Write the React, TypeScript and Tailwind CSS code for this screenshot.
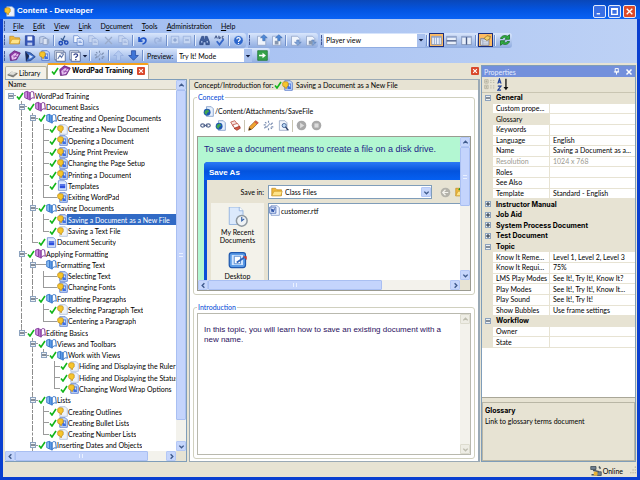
import React from "react";

/* ---------- Icons (16 x 16 grid) ---------- */

type IconProps = { size?: string; children: React.ReactNode };

function Icon({ size = "size-[11px]", children }: IconProps) {
  return (
    <svg viewBox="0 0 16 16" className={`${size} shrink-0`} fill="none" aria-hidden="true">
      {children}
    </svg>
  );
}

const Check = ({ size = "size-[8px]" }: { size?: string }) => (
  <Icon size={size}>
    <path d="M2 9l4 5L14 2" stroke="#12b51a" strokeWidth="3.2" />
  </Icon>
);

const Book = ({ blue = false }: { blue?: boolean }) => {
  const dark = blue ? "#2a6bc4" : "#7a2a92";
  const light = blue ? "#8fc1f5" : "#d49be6";
  return (
    <Icon>
      <path d="M1 3l4-1v11l-4-2z" fill={light} stroke={dark} strokeWidth="1.2" />
      <path d="M5 2l4 2v11l-4-2z" fill={blue ? "#5c9be8" : "#b56fcb"} stroke={dark} strokeWidth=".8" />
      <path d="M9 4c1-2 3-2 5-1l1 9c-2-1-4-1-6 2z" fill="#fff" stroke={dark} strokeWidth="1.4" />
    </Icon>
  );
};

const PurpleTopic = () => (
  <Icon size="size-[12px]">
    <path d="M1 6l6-5 8 3-5 9-8 1z" fill="#8d3aa5" stroke="#5d1c73" />
    <path d="M3 8l5-4 5 2-4 6-5 1z" fill="#e6c3f0" />
    <path d="M5 8l6 1M6 11l5-6" stroke="#8d3aa5" />
  </Icon>
);

const BubblePage = ({ screen = false }: { screen?: boolean }) => (
  <Icon>
    <path d="M4 1h8l3 3v11H4z" fill={screen ? "#c5dafa" : "#eef3fb"} stroke={screen ? "#3a62c0" : "#9fb2d0"} />
    {screen && <path d="M7 5h6v8H8z" fill="#3f6fe0" />}
    {screen && <path d="M9 7l3-1v5z" fill="#d5e4ff" />}
    <path d="M1 4c0-2 8-2 8 0v4c0 1-1 1-2 2l-1 3-2-3c-2 0-3-1-3-2z" fill="#f7c52c" stroke="#b07d10" strokeWidth=".9" />
  </Icon>
);

const TextPage = () => (
  <Icon>
    <path d="M2 1h9l3 3v11H2z" fill="#dce8ff" stroke="#5577c8" />
    <path d="M4 6h8v1.500H4zM4 8h8v4H4z" fill="#2d4fe0" />
  </Icon>
);

const Folder = ({ size = "size-[12px]", arrow = false }: { size?: string; arrow?: boolean }) => (
  <Icon size={size}>
    <path d="M1 13V3h5l2 2h6v8z" fill="#f0b83c" stroke="#b98216" strokeWidth=".8" />
    <path d="M1 13l3-6h11l-2 6z" fill="#ffe48a" stroke="#c89322" strokeWidth=".8" />
    {arrow && <path d="M8 9V3M5 5l3-4 3 4z" fill="#169a2a" stroke="#169a2a" />}
  </Icon>
);

const Save = () => (
  <Icon>
    <path d="M2 1h12l1 1v13H2z" fill="#3555b8" stroke="#1f3a92" />
    <path d="M5 2h7v6H5z" fill="#eef3ff" />
    <path d="M5 11h7v4H5z" fill="#b8c8ee" />
  </Icon>
);

const Pages = ({ faded = false }: { faded?: boolean }) => (
  <Icon>
    <path d="M1 1h6l3 3v7H1z" fill={faded ? "#c7d6f1" : "#f2f7ff"} stroke={faded ? "#93abd8" : "#5b7fc6"} />
    <path d="M6 5h6l3 3v7H6z" fill={faded ? "#c7d6f1" : "#dfeaff"} stroke={faded ? "#93abd8" : "#5b7fc6"} />
    <path d="M8 9h4M8 11h5" stroke={faded ? "#93abd8" : "#5b7fc6"} />
  </Icon>
);

const BooksGray = () => (
  <Icon>
    <path d="M1 3l5-1 4 2v9l-5-1-4 1z" fill="#c4d2ea" stroke="#7d92bb" />
    <path d="M6 5h6v9H6z" fill="#dbe4f3" stroke="#7d92bb" />
    <path d="M12 7l3-2v7l-3 2z" fill="#9aacc9" />
  </Icon>
);

const Cut = () => (
  <Icon>
    <path d="M10 1L6 9M4 5l8 5" stroke="#35598f" strokeWidth="1.800" />
    <circle cx="4" cy="12" r="2.500" stroke="#1d49b8" strokeWidth="2" />
    <circle cx="12" cy="11" r="2.500" stroke="#1d49b8" strokeWidth="2" />
  </Icon>
);

const Cross = () => (
  <Icon>
    <path d="M3 3l10 10M13 3L3 13" stroke="#9aabcb" strokeWidth="1.800" />
  </Icon>
);

const Undo = ({ redo = false }: { redo?: boolean }) => (
  <Icon>
    {redo ? (
      <path d="M13 3v6H8M12 8C9 3 4 4 4 8c0 2 1 4 3 4" stroke="#9bb1dc" strokeWidth="1.800" />
    ) : (
      <path d="M3 3v6h5M4 8c3-5 9-4 9 0 0 2-2 5-5 5" stroke="#2458c8" strokeWidth="2.400" />
    )}
  </Icon>
);

const BoxSign = ({ plus = false }: { plus?: boolean }) => (
  <Icon size="size-[10px]">
    <path d="M2 2h12v12H2z" fill="#c4d5f2" stroke="#91a9d6" />
    <path d={plus ? "M5 8h6M8 5v6" : "M5 8h6"} stroke="#7d96c8" strokeWidth="1.500" />
  </Icon>
);

const Binoculars = () => (
  <Icon>
    <path d="M4 2h3v4h2V2h3l3 8v4h-5v-4H6v4H1v-4z" fill="#405f9d" stroke="#27437e" />
    <path d="M3 10h2M11 10h2" stroke="#c9dcff" strokeWidth="2" />
  </Icon>
);

const Spell = () => (
  <Icon>
    <path d="M1 5l2-4 2 4M2 4h2M7 1v4h2V3H7M14 2h-2v3h2" stroke="#31477a" strokeWidth="1.200" />
    <path d="M4 9l4 5 6-8" stroke="#3667c9" strokeWidth="2.600" />
  </Icon>
);

const Help = () => (
  <Icon>
    <circle cx="8" cy="8" r="7" fill="#2c66cc" stroke="#cfe0fb" />
    <path d="M5.500 6c0-3 5-3 5 0 0 2-2.500 1.500-2.500 4M8 11.500v1.500" stroke="#fff" strokeWidth="1.700" />
  </Icon>
);

const PageArrow = ({ down = false, lock = false }: { down?: boolean; lock?: boolean }) => (
  <Icon size="size-[12px]">
    <path d="M2 3h8l3 3v9H2z" fill="#eff4fc" stroke="#8b9fc4" />
    {down ? (
      <path d="M9 8h3v3h3l-4.500 4L6 11h3z" fill="#7fa4d8" stroke="#5579b5" strokeWidth=".8" />
    ) : (
      <path d="M9 9V5H6l4.500-4L15 5h-3v4z" fill="#4f8ad8" stroke="#3464ae" strokeWidth=".8" />
    )}
    {lock && <path d="M5 9h5v5H5z" fill="#8797af" />}
  </Icon>
);

const Player = () => (
  <Icon size="size-[12px]">
    <path d="M2 2l7 2 6 5-6 5-6 1z" fill="#3d6ec9" stroke="#213d7c" />
    <path d="M2 2l5 6-4 7z" fill="#1b2a52" />
    <path d="M7 6l5 3-5 3z" fill="#cfe1ff" />
  </Icon>
);

const Windows = ({ mark }: { mark: boolean }) => (
  <Icon size="size-[12px]">
    <path d="M1 1h12v12H1z" fill="#f5f8ff" stroke="#5e6f93" />
    <path d="M3 3h12v12H3z" fill="#fff" stroke="#3f5383" />
    {mark ? (
      <path d="M6.500 7c0-2.500 5-2.500 5 0 0 2-2.500 1.500-2.500 3.500M9 12v1.500" stroke="#31418a" strokeWidth="1.700" />
    ) : (
      <path d="M5 12l3-5 2 3 3-5M9 5h4" stroke="#6278ab" strokeWidth="1.400" />
    )}
  </Icon>
);

const BrokenLink = () => (
  <Icon>
    <path d="M2 12l3-3M11 7l3-3M3 3l2 2M8 1v3M13 13l-2-2M8 15v-3M1 7h3M12 10h3" stroke="#7c8fb1" strokeWidth="1.700" />
    <path d="M5 11l5-6" stroke="#93a5c5" strokeWidth="1.500" />
  </Icon>
);

const BlockArrow = ({ down = false }: { down?: boolean }) => (
  <Icon>
    {down ? (
      <path d="M5 1h6v7h4l-7 7-7-7h4z" fill="#3e74d6" stroke="#1c429a" />
    ) : (
      <path d="M5 15h6V8h4L8 1 1 8h4z" fill="#b4caf0" stroke="#91abdd" />
    )}
  </Icon>
);

const GoArrow = () => (
  <Icon>
    <path d="M1 1h14v14H1z" fill="#35a24a" stroke="#17722a" />
    <path d="M3 7h5V4l5 4-5 4V9H3z" fill="#fff" />
  </Icon>
);

const Panes = ({ split }: { split: "list" | "rows" | "columns" }) => (
  <Icon>
    <path d="M1 2h14v12H1z" fill="#e8effa" stroke="#6c7fa6" />
    <path d="M1 3h14" stroke="#93a7cf" strokeWidth="2" />
    {split === "list" && <path d="M5 3v11M8 3v11M12 3v11" stroke="#8da3cc" strokeWidth="1.200" />}
    {split === "rows" && <path d="M1 8.500h14" stroke="#4a5d88" strokeWidth="2" />}
    {split === "columns" && <path d="M8 3v11" stroke="#4a5d88" strokeWidth="2" />}
  </Icon>
);

const PropertySheet = () => (
  <Icon>
    <path d="M1 5h12v10H1z" fill="#e9eef7" stroke="#5c6c8d" />
    <path d="M1 7h12M4 7v8M4 10h9M4 13h9" stroke="#8795b3" />
    <path d="M6 5l4-4 5 1-1 4-4 2z" fill="#f3cf68" stroke="#80611e" />
  </Icon>
);

const Refresh = () => (
  <Icon size="size-[12px]">
    <path d="M2 6c1-4 7-5 9-3l3-2v6H8l2-2C8 4 6 4 5 6z" fill="#30b040" stroke="#12691e" />
    <path d="M14 10c-1 4-7 5-9 3l-3 2V9h6l-2 2c2 1 4 1 5-1z" fill="#30b040" stroke="#12691e" />
  </Icon>
);

const Link = () => (
  <Icon>
    <ellipse cx="4" cy="8" rx="3" ry="2.300" stroke="#53658e" strokeWidth="1.700" />
    <ellipse cx="12" cy="8" rx="3" ry="2.300" stroke="#53658e" strokeWidth="1.700" />
    <path d="M5 8h6" stroke="#53658e" strokeWidth="1.700" />
  </Icon>
);

const WebPage = () => (
  <Icon>
    <path d="M5 1h7l3 3v11H5z" fill="#e6effc" stroke="#6586bc" />
    <circle cx="6" cy="9" r="5" fill="#1d56b0" />
    <path d="M3 7l4-2 2 3-3 2-1 3-3-3z" fill="#43a651" />
  </Icon>
);

const RedPages = () => (
  <Icon>
    <path d="M1 3l6-2 3 4-5 5z" fill="#f6dfdb" stroke="#b23a2c" />
    <path d="M4 7l7-2 3 5-7 3z" fill="#fff" stroke="#b23a2c" />
    <path d="M6 12l8-3 1 3-5 3z" fill="#d65a45" stroke="#8f2418" />
  </Icon>
);

const Pencil = () => (
  <Icon>
    <path d="M1 15l1-5L11 1l4 3-9 9z" fill="#f0a32e" stroke="#8c5614" />
    <path d="M1 15l1-4 3 3z" fill="#3b2a1a" />
    <path d="M11 1l4 3-2 2-4-3z" fill="#d45b4a" />
  </Icon>
);

const Preview = () => (
  <Icon>
    <path d="M2 1h8l3 3v11H2z" fill="#f1f5fc" stroke="#8698b9" />
    <circle cx="9" cy="8" r="3" fill="#bcd8f5" stroke="#3f5f93" strokeWidth="1.300" />
    <path d="M11 10l4 5" stroke="#2c3f66" strokeWidth="2" />
  </Icon>
);

const GrayDisc = ({ stop = false }: { stop?: boolean }) => (
  <Icon>
    <circle cx="8" cy="8" r="7" fill="#a8a8a8" />
    <path d={stop ? "M5 5h6v6H5z" : "M6 4l6 4-6 4z"} fill="#dcdcdc" />
  </Icon>
);

const LibraryIcon = () => (
  <Icon>
    <path d="M1 10l6-4 8 2-6 5z" fill="#8a8a85" stroke="#5d5d58" />
    <path d="M2 9l5-4 7 2-5 3z" fill="#deded8" />
  </Icon>
);

const OnlineIcon = () => (
  <Icon size="size-[12px]">
    <path d="M1 2h7v4H1zM9 9h6v5H9z" fill="#6f7f8f" stroke="#3a4652" />
    <path d="M2 13h6M4 7l8 2M12 2l2 3" stroke="#4a5662" strokeWidth="2" />
    <path d="M5 9h5v5H5z" fill="#eab333" />
  </Icon>
);

const WordFile = () => (
  <Icon>
    <path d="M3 1h9l3 3v11H3z" fill="#f0f5ff" stroke="#6a88c0" />
    <path d="M1 3h9v9H1z" fill="#dbe6fb" stroke="#2e55a8" />
    <path d="M3 5l1.500 5L5.500 6l1 4L8 5" stroke="#1f479f" strokeWidth="1.300" />
  </Icon>
);

const RecentIcon = () => (
  <Icon size="size-[20px]">
    <path d="M1 0h8l3 3v11H1z" fill="#dbe9fc" stroke="#8fb0de" strokeWidth=".7" />
    <path d="M9 0v3h3" fill="#fff" stroke="#8fb0de" strokeWidth=".7" />
    <circle cx="11" cy="11" r="4.300" fill="#eef2f5" stroke="#8d979f" strokeWidth="1.200" />
    <path d="M11 8v3l2-1.500" stroke="#2f5ea8" strokeWidth=".9" />
  </Icon>
);

const DesktopIcon = () => (
  <Icon size="size-[20px]">
    <rect x="1" y="2" width="13" height="12" rx="2" fill="#5b9be6" stroke="#1f58ae" />
    <path d="M3 4h9v8H3z" fill="#cfe4ff" />
    <path d="M5 5h5v6H5z" fill="#fff" stroke="#4d83cc" strokeWidth=".7" />
    <path d="M7 10l6-4" stroke="#2e62b8" strokeWidth="1.400" />
    <path d="M12 5h3v3z" fill="#d3392a" />
  </Icon>
);

const Categorized = () => (
  <Icon>
    <path d="M1 1h5v5H1zM1 9h5v5H1zM3.500 2v3M2 3.500h3M3.500 10v3M2 11.500h3M9 2h2M13 2h2M9 5h2M13 5h2M9 10h2M13 10h2M9 13h2M13 13h2" stroke="#aaa896" />
  </Icon>
);

/* ---------- Shared controls ---------- */

type Dir = "up" | "down" | "left" | "right";
const CHEVRONS: Record<Dir, string> = {
  up: "M3 10l5-5 5 5",
  down: "M3 6l5 5 5-5",
  left: "M10 3L5 8l5 5",
  right: "M6 3l5 5-5 5",
};

function ScrollButton({ dir, off = false }: { dir: Dir; off?: boolean }) {
  return (
    <button
      type="button"
      disabled={off}
      aria-label={`Scroll ${dir}`}
      className={`flex size-[10px] shrink-0 items-center justify-center rounded-[1px] border ${
        off ? "border-[#dddccf] bg-[#eeede5]" : "border-[#b4c8f6] bg-[#c6d6fc]"
      }`}
    >
      <Icon size="size-[7px]">
        <path d={CHEVRONS[dir]} stroke={off ? "#bdbcae" : "#3f5a8c"} strokeWidth="3.200" />
      </Icon>
    </button>
  );
}

function VScroll({ thumb, off = false }: { thumb?: string; off?: boolean }) {
  return (
    <div className="flex w-[10px] shrink-0 flex-col bg-[#f3f2ec]">
      <ScrollButton dir="up" off={off} />
      <div className="min-h-0 flex-1">
        {thumb && (
          <div className={`${thumb} flex items-center justify-center rounded-[1px] border border-[#a9bff2] bg-[#c4d4fc]`}>
            <span className="h-[4px] w-[4px] border-y border-[#e9f0ff]" />
          </div>
        )}
      </div>
      <ScrollButton dir="down" off={off} />
    </div>
  );
}

function HScroll({ thumb }: { thumb: string }) {
  return (
    <div className="flex h-[10px] min-w-0 flex-1 bg-[#f3f2ec]">
      <ScrollButton dir="left" />
      <div className="min-w-0 flex-1">
        <div className={`${thumb} flex h-[10px] items-center justify-center rounded-[1px] border border-[#a9bff2] bg-[#c4d4fc]`}>
          <span className="h-[4px] w-[4px] border-x border-[#e9f0ff]" />
        </div>
      </div>
      <ScrollButton dir="right" />
    </div>
  );
}

function Tool({ label, active = false, children }: { label: string; active?: boolean; children: React.ReactNode }) {
  return (
    <button
      type="button"
      aria-label={label}
      className={`flex h-[14px] w-[15px] shrink-0 items-center justify-center ${
        active ? "border border-[#1c2f7d] bg-[#fdbb62]" : ""
      }`}
    >
      {children}
    </button>
  );
}

const Sep = () => <span className="mx-[1px] h-[11px] w-[2px] shrink-0 border-l border-[#6f8fcb] border-r border-r-[#e8f0fd]" />;
const Grip = () => <span className="mx-[1px] h-[10px] w-[2px] shrink-0 border-l border-dashed border-[#41589a]" />;

function Strip({ children }: { children: React.ReactNode }) {
  return (
    <div className="flex h-[15px] shrink-0 items-center rounded-r-[3px] bg-linear-to-b from-[#d9e6fc] to-[#8eabe0]">
      <Grip />
      {children}
    </div>
  );
}

function Combo({ label, value, width }: { label: string; value: string; width: string }) {
  return (
    <div className={`${width} flex h-[13px] shrink-0 bg-white`}>
      <select aria-label={label} defaultValue={value} className="min-w-0 flex-1 appearance-none bg-white pl-[2px] outline-none">
        <option>{value}</option>
      </select>
      <span className="flex w-[8px] items-center justify-center bg-[#a9c1ee]">
        <Icon size="size-[6px]">
          <path d="M2 5h12l-6 7z" fill="#101c40" />
        </Icon>
      </span>
    </div>
  );
}

/* ---------- Tree ---------- */

type Kind = "book" | "folder" | "bubble" | "screen" | "text";
type Node = { name: string; depth: number; kind: Kind; checked?: boolean; rails?: string; last?: boolean; selected?: boolean };

/* rails: one letter per ancestor level, "|" continues a line and "." leaves it blank */
const NODES: Node[] = [
  { name: "WordPad Training", depth: 0, kind: "book", checked: true, rails: "", last: true },
  { name: "Document Basics", depth: 1, kind: "book", checked: true, rails: "." },
  { name: "Creating and Opening Documents", depth: 2, kind: "folder", checked: true, rails: ".|" },
  { name: "Creating a New Document", depth: 3, kind: "bubble", checked: true, rails: ".||" },
  { name: "Opening a Document", depth: 3, kind: "screen", checked: true, rails: ".||" },
  { name: "Using Print Preview", depth: 3, kind: "screen", checked: true, rails: ".||" },
  { name: "Changing the Page Setup", depth: 3, kind: "screen", checked: true, rails: ".||" },
  { name: "Printing a Document", depth: 3, kind: "screen", checked: true, rails: ".||" },
  { name: "Templates", depth: 3, kind: "text", checked: true, rails: ".||" },
  { name: "Exiting WordPad", depth: 3, kind: "screen", rails: ".||", last: true },
  { name: "Saving Documents", depth: 2, kind: "folder", checked: true, rails: ".|" },
  { name: "Saving a Document as a New File", depth: 3, kind: "screen", checked: true, rails: ".||", selected: true },
  { name: "Saving a Text File", depth: 3, kind: "bubble", checked: true, rails: ".||", last: true },
  { name: "Document Security", depth: 2, kind: "text", checked: true, rails: ".|", last: true },
  { name: "Applying Formatting", depth: 1, kind: "book", checked: true, rails: "." },
  { name: "Formatting Text", depth: 2, kind: "folder", rails: ".|" },
  { name: "Selecting Text", depth: 3, kind: "screen", rails: ".||" },
  { name: "Changing Fonts", depth: 3, kind: "screen", rails: ".||", last: true },
  { name: "Formatting Paragraphs", depth: 2, kind: "folder", checked: true, rails: ".|", last: true },
  { name: "Selecting Paragraph Text", depth: 3, kind: "bubble", checked: true, rails: ".|." },
  { name: "Centering a Paragraph", depth: 3, kind: "screen", rails: ".|.", last: true },
  { name: "Editing Basics", depth: 1, kind: "book", checked: true, rails: ".", last: true },
  { name: "Views and Toolbars", depth: 2, kind: "folder", checked: true, rails: ".." },
  { name: "Work with Views", depth: 3, kind: "folder", checked: true, rails: "..|", last: true },
  { name: "Hiding and Displaying the Ruler", depth: 4, kind: "bubble", checked: true, rails: "..|." },
  { name: "Hiding and Displaying the Status", depth: 4, kind: "bubble", checked: true, rails: "..|." },
  { name: "Changing Word Wrap Options", depth: 4, kind: "screen", checked: true, rails: "..|.", last: true },
  { name: "Lists", depth: 2, kind: "folder", checked: true, rails: ".." },
  { name: "Creating Outlines", depth: 3, kind: "bubble", checked: true, rails: "..|" },
  { name: "Creating Bullet Lists", depth: 3, kind: "screen", checked: true, rails: "..|" },
  { name: "Creating Number Lists", depth: 3, kind: "bubble", checked: true, rails: "..|", last: true },
  { name: "Inserting Dates and Objects", depth: 2, kind: "folder", checked: true, rails: ".." },
];

const KIND_ICONS: Record<Kind, React.ReactNode> = {
  book: <Book />,
  folder: <Book blue />,
  bubble: <BubblePage />,
  screen: <BubblePage screen />,
  text: <TextPage />,
};

function Expander({ open = true }: { open?: boolean }) {
  return (
    <button
      type="button"
      aria-label={open ? "Collapse" : "Expand"}
      className="flex size-[6px] shrink-0 items-center justify-center border border-[#8da3bf] bg-[#edf1f5]"
    >
      <svg viewBox="0 0 4 4" className="size-[4px] shrink-0" stroke="#1c2a3c" aria-hidden="true">
        <path d={open ? "M0 2h4" : "M0 2h4M2 0v4"} />
      </svg>
    </button>
  );
}

function TreeRow({ node }: { node: Node }) {
  const parent = node.kind === "book" || node.kind === "folder";
  return (
    <li role="treeitem" aria-level={node.depth + 1} aria-selected={!!node.selected} className="flex min-h-0 flex-1 items-center">
      {(node.rails ?? "").split("").map((rail, i) => (
        <span key={i} className={`ml-[5px] w-[6px] shrink-0 self-stretch ${rail === "|" ? "border-l border-dashed border-[#8c8c8c]" : ""}`} />
      ))}
      <span className="relative flex w-[11px] shrink-0 flex-col self-stretch pl-[5px]">
        <span className={`flex-1 border-b border-[#9a9a9a] ${node.depth > 0 ? "border-l" : ""}`} />
        <span className={`flex-1 border-[#9a9a9a] ${node.last ? "" : "border-l"}`} />
        {parent && (
          <span className="absolute inset-y-0 left-[3px] flex items-center">
            <Expander />
          </span>
        )}
      </span>
      <span className="flex w-[8px] shrink-0 justify-center">
        {node.checked ? <Check /> : <span className="h-[1px] w-[8px] bg-[#9a9a9a]" />}
      </span>
      <span className="flex w-[10px] shrink-0 justify-center">{KIND_ICONS[node.kind]}</span>
      <button
        type="button"
        className={`min-w-0 self-stretch overflow-hidden pl-[1px] text-left whitespace-nowrap ${
          node.selected ? "flex-1 bg-[#316ac5] text-white" : ""
        }`}
      >
        {node.name}
      </button>
    </li>
  );
}

/* ---------- Property grid ---------- */

type Prop = [string, string?];
const GROUPS: { title: string; items: Prop[] }[] = [
  {
    title: "General",
    items: [
      ["Custom prope..."],
      ["Glossary"],
      ["Keywords"],
      ["Language", "English"],
      ["Name", "Saving a Document as a..."],
      ["Resolution", "1024 x 768"],
      ["Roles"],
      ["See Also"],
      ["Template", "Standard - English"],
    ],
  },
  { title: "Instructor Manual", items: [] },
  { title: "Job Aid", items: [] },
  { title: "System Process Document", items: [] },
  { title: "Test Document", items: [] },
  {
    title: "Topic",
    items: [
      ["Know It Reme...", "Level 1, Level 2, Level 3"],
      ["Know It Requi...", "75%"],
      ["LMS Play Modes", "See It!, Try It!, Know It?"],
      ["Play Modes", "See It!, Try It!, Know It..."],
      ["Play Sound", "See It!, Try It!"],
      ["Show Bubbles", "Use frame settings"],
    ],
  },
  { title: "Workflow", items: [["Owner"], ["State"]] },
];

function PropertyTable() {
  return (
    <table className="h-[255px] w-full table-fixed border-separate border-spacing-0 leading-[9px] whitespace-nowrap">
      <colgroup>
        <col className="w-[11px]" />
        <col className="w-[57px]" />
        <col />
      </colgroup>
      {GROUPS.map((group) => (
        <tbody key={group.title}>
          <tr className="bg-[#e7e3d3]">
            <td className="border-b border-[#e7e3d3] p-0 pl-[3px]">
              <Expander open={group.items.length > 0} />
            </td>
            <th colSpan={2} className="border-b border-[#e7e3d3] p-0 pl-[3px] text-left font-[family-name:Inter,sans-serif] font-bold">
              {group.title}
            </th>
          </tr>
          {group.items.map(([name, value]) => (
            <tr key={name} className={name === "Resolution" ? "text-[#9b9a90]" : ""}>
              <td className="bg-[#e7e3d3] p-0" />
              <th
                className={`overflow-hidden border-r border-b border-[#e7e3d3] p-0 pl-[3px] text-left font-normal ${
                  name === "Glossary" ? "bg-[#e7e3d3]" : ""
                }`}
              >
                {name}
              </th>
              <td className="overflow-hidden border-b border-[#e7e3d3] p-0 pl-[3px]">{value}</td>
            </tr>
          ))}
        </tbody>
      ))}
    </table>
  );
}

/* ---------- Save As sample inside the concept page ---------- */

function SaveAsSample() {
  return (
    <div className="ml-[6px] flex min-h-0 flex-1 flex-col overflow-hidden rounded-tl-[4px] bg-[#0a50d8]">
      <div className="flex h-[18px] shrink-0 items-center bg-linear-to-b from-[#2a7af5] via-[#0453dd] to-[#0560f2] pt-[3px] pl-[5px] font-[family-name:'Liberation_Sans',sans-serif] text-[8px] font-bold text-white">
        Save As
      </div>
      <div className="ml-[3px] flex min-h-0 flex-1 flex-col gap-[4px] bg-[#e7e3d3] pt-[5px] pl-[4px]">
        <div className="flex h-[14px] shrink-0 items-center">
          <label htmlFor="save-in" className="w-[53px] shrink-0 text-right">
            Save in:
          </label>
          <div className="ml-[4px] flex h-[14px] w-[164px] shrink-0 items-center border border-[#7f9db9] bg-white pl-[2px]">
            <Folder />
            <select id="save-in" className="min-w-0 flex-1 appearance-none bg-white pl-[2px] outline-none">
              <option>Class Files</option>
            </select>
            <ScrollButton dir="down" />
          </div>
          <button type="button" aria-label="Back" className="ml-[8px] shrink-0">
            <Icon>
              <circle cx="8" cy="8" r="7" fill="#b3b2aa" />
              <path d="M12 8H5M8 4L4 8l4 4" stroke="#f4f3ee" strokeWidth="1.800" />
            </Icon>
          </button>
          <button type="button" aria-label="Up one level" className="ml-[4px] shrink-0">
            <Folder arrow />
          </button>
        </div>
        <div className="flex min-h-0 flex-1 gap-[4px]">
          <div className="flex w-[53px] shrink-0 flex-col items-center overflow-hidden bg-[#f3f2ea] pt-[4px] text-center leading-[8px]">
            <RecentIcon />
            <span className="mt-[1px]">My Recent Documents</span>
            <span className="mt-[6px]">
              <DesktopIcon />
            </span>
            <span className="mt-[2px]">Desktop</span>
          </div>
          <div className="flex-1 border-t border-l border-[#7f9db9] bg-white pt-[1px]">
            <div className="flex items-center gap-[1px]">
              <WordFile />
              customer.rtf
            </div>
          </div>
        </div>
      </div>
    </div>
  );
}

/* ---------- Window ---------- */

const MENUS: [string, string, string][] = [
  ["", "F", "ile"],
  ["", "E", "dit"],
  ["", "V", "iew"],
  ["", "L", "ink"],
  ["D", "o", "cument"],
  ["", "T", "ools"],
  ["", "A", "dministration"],
  ["", "H", "elp"],
];

function CaptionButton({ label, close = false, path }: { label: string; close?: boolean; path: string }) {
  return (
    <button
      type="button"
      aria-label={label}
      className={`flex size-[13px] items-center justify-center rounded-[2px] border border-[#e3ebfb] ${close ? "bg-[#dd4a28]" : "bg-[#3a6fe4]"}`}
    >
      <Icon size="size-[9px]">
        <path d={path} stroke="#fff" strokeWidth="2.400" />
      </Icon>
    </button>
  );
}

const RedClose = ({ label }: { label: string }) => (
  <button type="button" aria-label={label} className="flex size-[8px] shrink-0 items-center justify-center rounded-[1px] bg-[#d9482b]">
    <Icon size="size-[6px]">
      <path d="M3 3l10 10M13 3L3 13" stroke="#fff" strokeWidth="3" />
    </Icon>
  </button>
);

export default function App() {
  return (
    <div className="flex h-screen flex-col overflow-hidden bg-[#0a3fd0] font-[family-name:Lato,'Liberation_Sans',sans-serif] text-[7px] leading-[10px] text-black">
      <header className="flex h-[19px] shrink-0 items-center rounded-t-[4px] bg-linear-to-b from-[#0a47b8] via-[#0354e0] to-[#0a62f5] pt-[3px] pr-[4px] pl-[4px]">
        <BubblePage />
        <h1 className="ml-[2px] flex-1 font-[family-name:'Liberation_Sans',sans-serif] text-[8px] font-bold text-white">Content - Developer</h1>
        <div className="flex gap-[2px]">
          <CaptionButton label="Minimize" path="M3 12h6" />
          <CaptionButton label="Maximize" path="M3 3h10v10H3zM3 4h10" />
          <CaptionButton label="Close" close path="M3 3l10 10M13 3L3 13" />
        </div>
      </header>

      <div className="mx-[3px] mb-[3px] flex min-h-0 flex-1 flex-col bg-[#e7e3d3]">
        <div className="shrink-0 bg-linear-to-r from-[#9dbaf0] to-[#bdd1f5]">
          <nav className="flex h-[13px] items-center">
            <Grip />
            <ul className="ml-[6px] flex gap-[9px]">
              {MENUS.map(([before, key, after]) => (
                <li key={key + after}>
                  <button type="button">
                    {before}
                    <u>{key}</u>
                    {after}
                  </button>
                </li>
              ))}
            </ul>
          </nav>
          <div className="flex h-[16px] items-center gap-[2px]">
            <Strip>
              <Tool label="Open"><Folder /></Tool>
              <Tool label="Save"><Save /></Tool>
              <Tool label="Check in"><BooksGray /></Tool>
              <Sep />
              <Tool label="Cut"><Cut /></Tool>
              <Tool label="Copy"><Pages /></Tool>
              <Tool label="Paste"><Pages faded /></Tool>
              <Tool label="Delete"><Cross /></Tool>
              <Tool label="Rename"><Pages faded /></Tool>
              <Sep />
              <Tool label="Undo"><Undo /></Tool>
              <Tool label="Redo"><Undo redo /></Tool>
              <Sep />
              <span className="flex w-[24px] items-center justify-between px-[1px]">
                <button type="button" aria-label="Expand all"><BoxSign plus /></button>
                <button type="button" aria-label="Collapse all"><BoxSign /></button>
              </span>
              <Sep />
              <Tool label="Find"><Binoculars /></Tool>
              <Tool label="Spelling"><Spell /></Tool>
              <Sep />
              <Tool label="Help"><Help /></Tool>
            </Strip>
            <Strip>
              <span className="ml-[2px] flex">
                <Tool label="Check out"><PageArrow /></Tool>
                <Tool label="Check in all"><PageArrow lock /></Tool>
              </span>
              <Sep />
              <Tool label="Get"><PageArrow down /></Tool>
              <Tool label="Undo check out"><PageArrow lock down /></Tool>
            </Strip>
            <Strip>
              <Combo label="View" value="Player view" width="w-[101px]" />
              <Sep />
              <Tool label="List layout" active><Panes split="list" /></Tool>
              <Tool label="Row layout"><Panes split="rows" /></Tool>
              <Tool label="Column layout"><Panes split="columns" /></Tool>
              <Sep />
              <Tool label="Properties" active><PropertySheet /></Tool>
              <Sep />
              <Tool label="Refresh"><Refresh /></Tool>
            </Strip>
          </div>
          <div className="flex h-[15px] items-center">
            <Strip>
              <Tool label="New module"><PurpleTopic /></Tool>
              <Tool label="New section"><Player /></Tool>
              <Tool label="New topic"><BubblePage screen /></Tool>
              <Tool label="New frame"><Windows mark={false} /></Tool>
              <Tool label="New question"><Windows mark /></Tool>
              <Icon size="size-[6px]">
                <path d="M2 5h12l-6 7z" fill="#101c40" />
              </Icon>
              <Sep />
              <Tool label="Broken links"><BrokenLink /></Tool>
              <Sep />
              <Tool label="Move up"><BlockArrow /></Tool>
              <Tool label="Move down"><BlockArrow down /></Tool>
              <Sep />
              <span className="ml-[2px] w-[30px]">Preview:</span>
              <Combo label="Preview mode" value="Try It! Mode" width="w-[75px]" />
              <span className="ml-[3px] flex">
                <Tool label="Go"><GoArrow /></Tool>
              </span>
            </Strip>
          </div>
        </div>

        <main className="flex min-h-0 flex-1 gap-[1px]">
          <section className="ml-[2px] flex min-w-0 flex-1 flex-col">
            <div className="flex h-[16px] shrink-0 items-end" role="tablist">
              <button type="button" role="tab" aria-selected="false" className="flex h-[13px] w-[42px] items-center gap-[1px] rounded-t-[2px] border border-b-0 border-[#b5b19d] bg-[#f3f1e8] pl-[1px]">
                <LibraryIcon />
                Library
              </button>
              <div className="flex h-[16px] items-center rounded-t-[2px] border border-t-2 border-b-0 border-[#b5b19d] border-t-[#f5a21d] bg-white px-[3px] pb-[2px]">
                <button type="button" role="tab" aria-selected="true" className="flex items-center font-[family-name:Inter,sans-serif] font-bold">
                  <Check />
                  <PurpleTopic />
                  <span className="mr-[4px] ml-[1px]">WordPad Training</span>
                </button>
                <RedClose label="Close tab" />
              </div>
              <span className="mr-[1px] mb-[4px] ml-auto flex">
                <RedClose label="Close document" />
              </span>
            </div>

            <div className="flex min-h-0 flex-1 gap-[2px]">
              <aside className="flex w-[182px] shrink-0 flex-col border border-l-0 border-[#7f9db9] bg-white">
                <div className="flex min-h-0 flex-1">
                  <div className="flex min-w-0 flex-1 flex-col overflow-hidden">
                    <div className="h-[10px] shrink-0 border-b border-[#c9c5b2] bg-[#ebe8dc] pl-[3px] leading-[9px]">Name</div>
                    <ul role="tree" className="flex min-h-0 flex-1 flex-col">
                      {NODES.map((node) => (
                        <TreeRow key={node.name} node={node} />
                      ))}
                    </ul>
                  </div>
                  <VScroll thumb="h-[94%]" />
                </div>
                <div className="flex bg-[#e7e3d3] pr-[10px]">
                  <HScroll thumb="w-[88%]" />
                </div>
              </aside>

              <article className="flex min-w-0 flex-1 flex-col border border-[#9aa9b5] border-r-2 bg-white">
                <div className="flex h-[10px] shrink-0 items-center bg-[#e7e3d3] pl-[4px]">
                  <span className="w-[80px]">Concept/Introduction for:</span>
                  <Check />
                  <BubblePage screen />
                  <span className="ml-[3px]">Saving a Document as a New File</span>
                </div>
                <div className="flex min-h-0 flex-1 flex-col gap-[7px] px-[3px] pt-[2px] pb-[2px]">
                  <fieldset className="flex min-h-0 min-w-0 flex-[204] flex-col rounded-[3px] border border-[#d0d0bf] px-[3px] pb-[3px]">
                    <legend className="h-[10px] px-[1px] text-[#0046d5]">Concept</legend>
                    <div className="mt-[3px] flex h-[12px] shrink-0 items-center gap-[1px] pl-[6px]">
                      <WebPage />
                      /Content/Attachments/SaveFile
                    </div>
                    <div className="mt-[1px] mb-[3px] flex h-[15px] shrink-0 items-center pl-[1px]">
                      <Tool label="Link"><Link /></Tool>
                      <Tool label="Web page"><WebPage /></Tool>
                      <Tool label="Packages"><RedPages /></Tool>
                      <span className="mx-[1px] h-[12px] w-px bg-[#c9c5b2]" />
                      <Tool label="Edit"><Pencil /></Tool>
                      <Tool label="Unlink"><BrokenLink /></Tool>
                      <Tool label="Preview"><Preview /></Tool>
                      <span className="mx-[1px] h-[12px] w-px bg-[#c9c5b2]" />
                      <Tool label="Play"><GrayDisc /></Tool>
                      <Tool label="Stop"><GrayDisc stop /></Tool>
                    </div>
                    <div className="flex min-h-0 flex-1 flex-col border border-[#9b9b90]">
                      <div className="flex min-h-0 flex-1">
                        <div className="flex min-w-0 flex-1 flex-col overflow-hidden bg-[#b3f7d2]">
                          <p className="h-[25px] shrink-0 pt-[7px] pl-[6px] font-[family-name:'Liberation_Sans',sans-serif] text-[9px] whitespace-nowrap text-[#1c1c88]">
                            To save a document means to create a file on a disk drive.
                          </p>
                          <SaveAsSample />
                        </div>
                        <VScroll thumb="h-[48%]" />
                      </div>
                      <div className="flex bg-[#e7e3d3] pr-[10px]">
                        <HScroll thumb="w-[72%]" />
                      </div>
                    </div>
                  </fieldset>

                  <fieldset className="flex min-h-0 min-w-0 flex-[156] flex-col rounded-[3px] border border-[#d0d0bf] px-[3px] pb-[3px]">
                    <legend className="h-[10px] px-[1px] text-[#0046d5]">Introduction</legend>
                    <div className="mt-[1px] flex min-h-0 flex-1 border border-[#b9b9ae]">
                      <textarea
                        aria-label="Introduction"
                        className="min-w-0 flex-1 resize-none overflow-hidden bg-white pt-[11px] pr-[6px] pl-[6px] font-[family-name:'Liberation_Sans',sans-serif] text-[8px] leading-[10px] text-[#2a1160] outline-none"
                        defaultValue="In this topic, you will learn how to save an existing document with a new name."
                      />
                      <VScroll off />
                    </div>
                  </fieldset>
                </div>
              </article>
            </div>
          </section>

          <aside className="mt-[2px] mr-[1px] flex w-[155px] shrink-0 flex-col border border-[#7f9db9] bg-[#e7e3d3]">
            <div className="flex h-[11px] shrink-0 items-center gap-[5px] bg-[#7390dc] pr-[2px] pl-[2px] text-[#e6edff]">
              <h2 className="flex-1">Properties</h2>
              <button type="button" aria-label="Pin">
                <Icon size="size-[7px]">
                  <path d="M5 1h7v8H5zM2 9h12M8 9v6" stroke="#fff" strokeWidth="2.200" />
                </Icon>
              </button>
              <button type="button" aria-label="Close properties">
                <Icon size="size-[8px]">
                  <path d="M3 3l10 10M13 3L3 13" stroke="#fff" strokeWidth="3" />
                </Icon>
              </button>
            </div>
            <div className="flex h-[16px] shrink-0 items-center border-b border-[#c9c5b2]">
              <Tool label="Categorized"><Categorized /></Tool>
              <button type="button" aria-label="Alphabetical" className="flex w-[15px] items-center">
                <Icon size="size-[13px]">
                  <path d="M1 7l2-6 2 6M2 5h3M1 10h4l-4 5h4" stroke="#1d3f9c" strokeWidth="1.400" />
                  <path d="M11 1v11" stroke="#111" strokeWidth="1.600" />
                  <path d="M8 11h6l-3 4z" fill="#111" />
                </Icon>
              </button>
            </div>
            <div className="min-h-0 flex-1 overflow-hidden border-b border-[#a9a798] bg-white">
              <PropertyTable />
            </div>
            <div className="mt-[4px] h-[59px] shrink-0 border border-[#b9b6a5] px-[2px] pt-[3px]">
              <h3 className="font-[family-name:Inter,sans-serif] font-bold">Glossary</h3>
              <p>Link to glossary terms document</p>
            </div>
          </aside>
        </main>

        <footer className="flex h-[15px] shrink-0 items-center justify-end gap-[1px] pt-[2px]">
          <OnlineIcon />
          <span className="mr-[4px]">Online</span>
          <Icon size="size-[9px]">
            <path d="M12 2h2M8 7h2M12 7h2M4 12h2M8 12h2M12 12h2" stroke="#a8a592" strokeWidth="2" />
          </Icon>
        </footer>
      </div>
    </div>
  );
}
